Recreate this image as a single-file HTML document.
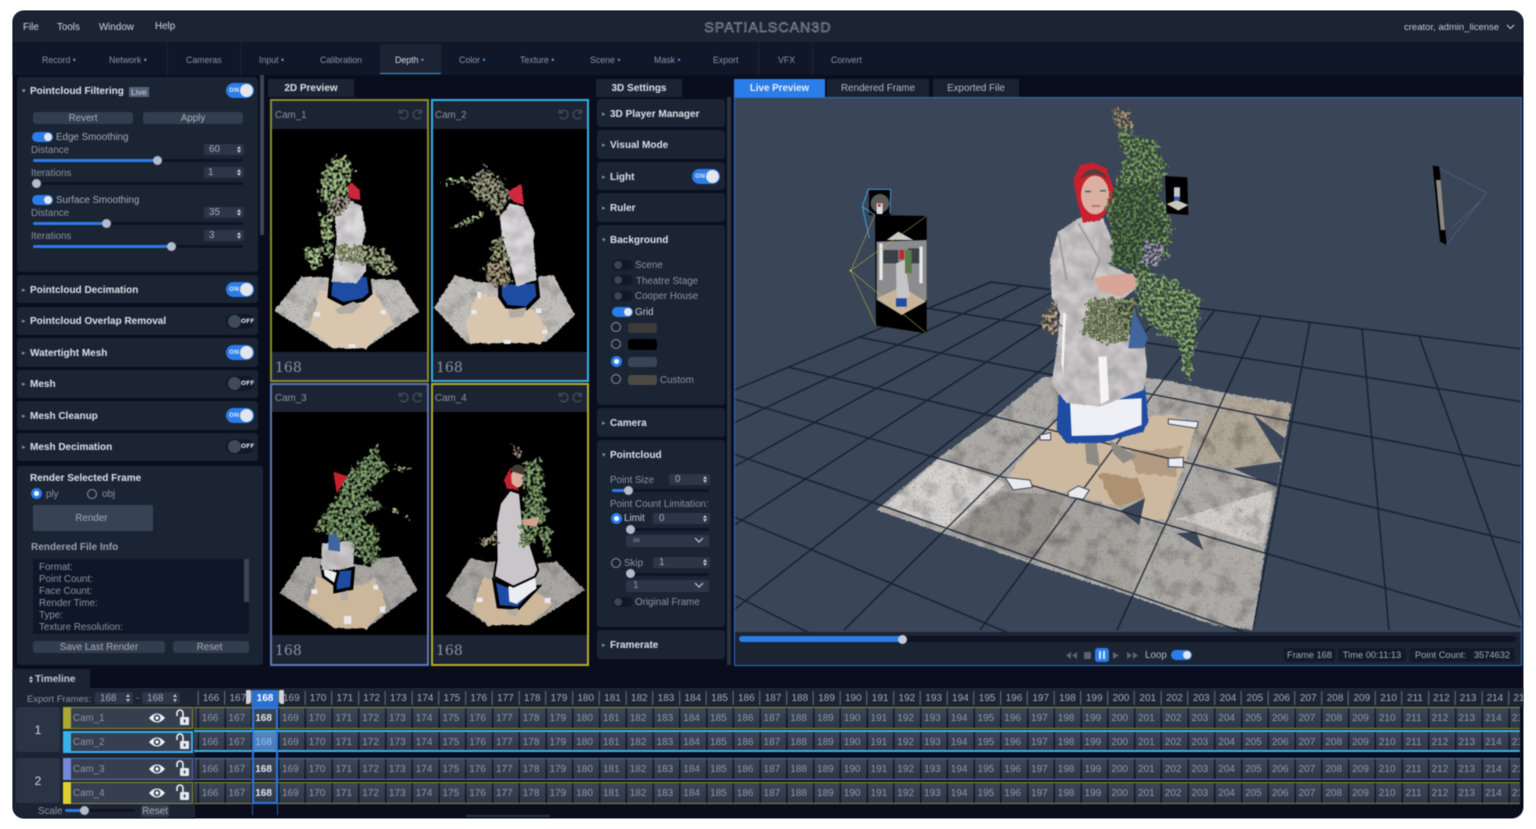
<!DOCTYPE html>
<html><head><meta charset="utf-8"><title>SpatialScan3D</title>
<style>
html,body{margin:0;padding:0;background:#fff;width:1536px;height:829px;overflow:hidden}
#app{position:absolute;left:13px;top:11px;width:1510px;height:807px;background:#0a0e1c;border-radius:11px;box-shadow:0 0 0 1px #8a8f98}
#r{position:absolute;left:0;top:0;width:1536px;height:829px;overflow:hidden;font:9.8px/12px "Liberation Sans",sans-serif;color:#a3abb9;filter:blur(.4px)}
.b,.t,.sp,.th,.fl,.tg,.ts,.rd,.dd{position:absolute}
.t{white-space:pre;margin-top:1px}
.h{font-weight:bold;font-size:10px;color:#dde1e8;margin-top:2px}
.m{color:#8b94a3}
.p{background:#1b2433;border-radius:3px}
.btn{background:#323d4e;border-radius:3px;text-align:center;color:#a9b1be}
.sp{background:#2c3647;border-radius:2px;color:#a3abb9;height:11px;line-height:12px}
.sp:before,.sp:after{content:"";position:absolute;right:3px;border-left:2px solid transparent;border-right:2px solid transparent}
.sp:before{top:2px;border-bottom:3px solid #c4cad4}
.sp:after{bottom:2px;border-top:3px solid #c4cad4}
.tr{background:#0e1422;height:3px;border-radius:2px}
.fl{background:#2b7de9;height:3px;border-radius:2px}
.th{width:9px;height:9px;border-radius:50%;background:#b4bccb}
.tg{width:28px;height:15px;border-radius:8px;background:#2b7de9;font:bold 6px/15px "DejaVu Sans",sans-serif;color:#c9dcf8}
.tg:after{content:"";position:absolute;right:1px;top:1px;width:13px;height:13px;border-radius:50%;background:#e3e6eb}
.tg.off{background:#121827;color:#d8dce3}
.tg.off:after{right:auto;left:2px;background:#3f4a5c}
.ts{width:21px;height:10px;border-radius:5px;background:#2b7de9}
.ts:after{content:"";position:absolute;right:1px;top:1px;width:8px;height:8px;border-radius:50%;background:#e3e6eb}
.ts.off{background:#121827}
.ts.off:after{right:auto;left:2px;background:#3a4556}
.rd{width:10px;height:10px;border:1px solid #8a93a2;border-radius:50%;box-sizing:border-box}
.rd.on{background:#fff;border:3px solid #2b7de9;width:11px;height:11px}
.dd{background:#2c3647;border-radius:2px;height:12px;line-height:12px}
.n{font-size:8.8px}
.row{position:absolute;left:194px;width:1326px;height:20px;overflow:hidden;white-space:pre;font-size:10px;line-height:22px;word-spacing:7.29px;padding-left:7.7px;box-sizing:border-box;color:#8d97a8;background:linear-gradient(#ffffff0a,#00000022),repeating-linear-gradient(90deg,#0e1322 0,#0e1322 1.5px,#343f50 1.5px,#343f50 26.75px);background-position:0 0,3.5px 0}
.row b{color:#e4e8ee}
</style></head><body>
<div id="app"></div>
<div id="r">
<!-- title + tabs -->
<div class="b" style="left:13px;top:11px;width:1510px;height:31px;background:#1c2433;border-radius:11px 11px 0 0"></div>
<div class="b" style="left:13px;top:42px;width:1510px;height:33px;background:#0f1729"></div>
<div class="t" style="left:23px;top:21px;color:#d3d8e0">File</div>
<div class="t" style="left:57px;top:21px;color:#d3d8e0">Tools</div>
<div class="t" style="left:99px;top:21px;color:#d3d8e0">Window</div>
<div class="t" style="left:155px;top:20px;color:#d3d8e0">Help</div>
<div class="t" style="left:1404px;top:21px;color:#c3c9d3;font-size:9.5px">creator, admin_license</div>
<div class="b" style="left:380px;top:44px;width:61px;height:29px;background:#1c2433;border-bottom:1px solid #38a0e0"></div>
<div class="b" style="left:167px;top:42px;width:1px;height:33px;background:#1c2536"></div>
<div class="b" style="left:240px;top:42px;width:1px;height:33px;background:#1c2536"></div>
<div class="b" style="left:758px;top:42px;width:1px;height:33px;background:#1c2536"></div>
<div class="b" style="left:812px;top:42px;width:1px;height:33px;background:#1c2536"></div>
<div class="t m n" style="left:42px;top:53px">Record •</div>
<div class="t m n" style="left:109px;top:53px">Network •</div>
<div class="t m n" style="left:186px;top:53px">Cameras</div>
<div class="t m n" style="left:259px;top:53px">Input •</div>
<div class="t m n" style="left:320px;top:53px">Calibration</div>
<div class="t n" style="left:395px;top:53px;color:#d8dde5">Depth <span style="color:#3a90f0">•</span></div>
<div class="t m n" style="left:459px;top:53px">Color <span style="color:#3a90f0">•</span></div>
<div class="t m n" style="left:520px;top:53px">Texture •</div>
<div class="t m n" style="left:590px;top:53px">Scene <span style="color:#3a90f0">•</span></div>
<div class="t m n" style="left:654px;top:53px">Mask <span style="color:#3a90f0">•</span></div>
<div class="t m n" style="left:713px;top:53px">Export</div>
<div class="t m n" style="left:778px;top:53px">VFX</div>
<div class="t m n" style="left:831px;top:53px">Convert</div>

<!-- left panel -->
<div class="b p" style="left:17px;top:77px;width:241px;height:195px"></div>
<div class="b" style="left:260px;top:75px;width:4px;height:160px;background:#3a4556"></div>
<div class="t" style="left:22px;top:85px;font-size:7px;color:#9aa3b1">▾</div>
<div class="t h" style="left:30px;top:84px">Pointcloud Filtering</div>
<div class="t" style="left:129px;top:86px;font-size:8.5px;line-height:10px;background:#56627a;color:#c7ccd6;padding:0 2px">Live</div>
<div class="tg" style="left:226px;top:83px;text-indent:3px">ON</div>
<div class="b btn" style="left:33px;top:112px;width:100px;height:12px;line-height:13px">Revert</div>
<div class="b btn" style="left:143px;top:112px;width:100px;height:12px;line-height:13px">Apply</div>
<div class="ts" style="left:32px;top:132px"></div><div class="t" style="left:56px;top:131px">Edge Smoothing</div>
<div class="t m" style="left:31px;top:144px">Distance</div><div class="sp" style="left:204px;top:144px;width:40px;text-indent:5px">60</div>
<div class="b tr" style="left:33px;top:159px;width:210px"></div><div class="fl" style="left:33px;top:159px;width:124px"></div><div class="th" style="left:153px;top:156px"></div>
<div class="t m" style="left:31px;top:167px">Iterations</div><div class="sp" style="left:204px;top:167px;width:40px;text-indent:4px">1</div>
<div class="b tr" style="left:33px;top:182px;width:210px"></div><div class="th" style="left:32px;top:179px"></div>
<div class="ts" style="left:32px;top:195px"></div><div class="t" style="left:56px;top:194px">Surface Smoothing</div>
<div class="t m" style="left:31px;top:207px">Distance</div><div class="sp" style="left:204px;top:207px;width:40px;text-indent:5px">35</div>
<div class="b tr" style="left:33px;top:222px;width:210px"></div><div class="fl" style="left:33px;top:222px;width:73px"></div><div class="th" style="left:102px;top:219px"></div>
<div class="t m" style="left:31px;top:230px">Iterations</div><div class="sp" style="left:204px;top:230px;width:40px;text-indent:5px">3</div>
<div class="b tr" style="left:33px;top:245px;width:210px"></div><div class="fl" style="left:33px;top:245px;width:138px"></div><div class="th" style="left:167px;top:242px"></div>

<div class="b p" style="left:17px;top:275px;width:241px;height:28px"></div>
<div class="b p" style="left:17px;top:307px;width:241px;height:28px"></div>
<div class="b p" style="left:17px;top:338px;width:241px;height:29px"></div>
<div class="b p" style="left:17px;top:370px;width:241px;height:28px"></div>
<div class="b p" style="left:17px;top:401px;width:241px;height:29px"></div>
<div class="b p" style="left:17px;top:433px;width:241px;height:28px"></div>
<div class="t" style="left:22px;top:284px;font-size:7px;color:#8a93a2">▸</div><div class="t h" style="left:30px;top:283px">Pointcloud Decimation</div><div class="tg" style="left:226px;top:282px;text-indent:3px">ON</div>
<div class="t" style="left:22px;top:315px;font-size:7px;color:#8a93a2">▸</div><div class="t h" style="left:30px;top:314px">Pointcloud Overlap Removal</div><div class="tg off" style="left:226px;top:314px;text-indent:15px">OFF</div>
<div class="t" style="left:22px;top:347px;font-size:7px;color:#8a93a2">▸</div><div class="t h" style="left:30px;top:346px">Watertight Mesh</div><div class="tg" style="left:226px;top:345px;text-indent:3px">ON</div>
<div class="t" style="left:22px;top:378px;font-size:7px;color:#8a93a2">▸</div><div class="t h" style="left:30px;top:377px">Mesh</div><div class="tg off" style="left:226px;top:376px;text-indent:15px">OFF</div>
<div class="t" style="left:22px;top:410px;font-size:7px;color:#8a93a2">▸</div><div class="t h" style="left:30px;top:409px">Mesh Cleanup</div><div class="tg" style="left:226px;top:408px;text-indent:3px">ON</div>
<div class="t" style="left:22px;top:441px;font-size:7px;color:#8a93a2">▸</div><div class="t h" style="left:30px;top:440px">Mesh Decimation</div><div class="tg off" style="left:226px;top:439px;text-indent:15px">OFF</div>

<div class="b p" style="left:17px;top:466px;width:246px;height:199px"></div>
<div class="t h" style="left:30px;top:471px">Render Selected Frame</div>
<div class="rd on" style="left:31px;top:488px"></div><div class="t m" style="left:46px;top:488px">ply</div>
<div class="rd" style="left:87px;top:489px"></div><div class="t m" style="left:102px;top:488px">obj</div>
<div class="b" style="left:33px;top:505px;width:120px;height:26px;background:#374354;border-radius:2px;text-align:center;line-height:27px;text-indent:-3px">Render</div>
<div class="t" style="left:31px;top:541px;font-weight:bold;color:#98a1af;font-size:10px">Rendered File Info</div>
<div class="b" style="left:33px;top:559px;width:216px;height:75px;background:#0f1627;overflow:hidden">
<div class="t m" style="left:6px;top:2px">Format:</div>
<div class="t m" style="left:6px;top:14px">Point Count:</div>
<div class="t m" style="left:6px;top:26px">Face Count:</div>
<div class="t m" style="left:6px;top:38px">Render Time:</div>
<div class="t m" style="left:6px;top:50px">Type:</div>
<div class="t m" style="left:6px;top:62px">Texture Resolution:</div>
<div class="b" style="left:211px;top:0;width:5px;height:43px;background:#3a4556"></div>
</div>
<div class="b btn" style="left:33px;top:641px;width:132px;height:12px;line-height:14px">Save Last Render</div>
<div class="b btn" style="left:173px;top:641px;width:76px;height:12px;line-height:14px;text-indent:-3px">Reset</div>

<!-- 2D preview -->
<div class="b" style="left:268px;top:79px;width:86px;height:18px;background:#1c2433;text-align:center;line-height:20px;font-weight:bold;color:#dde1e8;font-size:10px">2D Preview</div>
<div class="b" style="left:270px;top:99px;width:155px;height:279px;background:#1c2433;border:2px solid #888d2a"></div>
<div class="b" style="left:431px;top:99px;width:154px;height:279px;background:#1c2433;border:2px solid #3ab0e8"></div>
<div class="b" style="left:270px;top:383px;width:155px;height:279px;background:#1c2433;border:2px solid #5c78b8"></div>
<div class="b" style="left:431px;top:383px;width:154px;height:279px;background:#1c2433;border:2px solid #b5ae2c"></div>
<div class="b" style="left:272px;top:129px;width:155px;height:223px;background:#000"></div>
<div class="b" style="left:433px;top:129px;width:154px;height:223px;background:#000"></div>
<div class="b" style="left:272px;top:412px;width:155px;height:223px;background:#000"></div>
<div class="b" style="left:433px;top:412px;width:154px;height:223px;background:#000"></div>
<div class="t m" style="left:275px;top:109px">Cam_1</div><div class="t m" style="left:435px;top:109px">Cam_2</div>
<div class="t m" style="left:275px;top:392px">Cam_3</div><div class="t m" style="left:435px;top:392px">Cam_4</div>
<div class="t" style="left:275px;top:360px;font:14px/14px 'DejaVu Serif',serif;color:#8a94a8">168</div>
<div class="t" style="left:436px;top:360px;font:14px/14px 'DejaVu Serif',serif;color:#8a94a8">168</div>
<div class="t" style="left:275px;top:643px;font:14px/14px 'DejaVu Serif',serif;color:#8a94a8">168</div>
<div class="t" style="left:436px;top:643px;font:14px/14px 'DejaVu Serif',serif;color:#8a94a8">168</div>

<!-- 3D settings -->
<div class="b" style="left:596px;top:79px;width:86px;height:18px;background:#1c2433;text-align:center;line-height:20px;font-weight:bold;color:#dde1e8;font-size:10px">3D Settings</div>
<div class="b" style="left:727px;top:97px;width:4px;height:568px;background:#2a3444"></div>
<div class="b p" style="left:597px;top:99px;width:128px;height:28px"></div>
<div class="b p" style="left:597px;top:130px;width:128px;height:29px"></div>
<div class="b p" style="left:597px;top:162px;width:128px;height:28px"></div>
<div class="b p" style="left:597px;top:193px;width:128px;height:29px"></div>
<div class="b p" style="left:597px;top:225px;width:128px;height:180px"></div>
<div class="b p" style="left:597px;top:408px;width:128px;height:29px"></div>
<div class="b p" style="left:597px;top:440px;width:128px;height:187px"></div>
<div class="b p" style="left:597px;top:630px;width:128px;height:29px"></div>
<div class="t" style="left:602px;top:108px;font-size:7px;color:#8a93a2">▸</div><div class="t h" style="left:610px;top:107px">3D Player Manager</div>
<div class="t" style="left:602px;top:139px;font-size:7px;color:#8a93a2">▸</div><div class="t h" style="left:610px;top:138px">Visual Mode</div>
<div class="t" style="left:602px;top:171px;font-size:7px;color:#8a93a2">▸</div><div class="t h" style="left:610px;top:170px">Light</div><div class="tg" style="left:692px;top:169px;text-indent:3px">ON</div>
<div class="t" style="left:602px;top:202px;font-size:7px;color:#8a93a2">▸</div><div class="t h" style="left:610px;top:201px">Ruler</div>
<div class="t" style="left:602px;top:234px;font-size:7px;color:#8a93a2">▾</div><div class="t h" style="left:610px;top:233px">Background</div>
<div class="ts off" style="left:612px;top:260px"></div><div class="t m" style="left:635px;top:259px">Scene</div>
<div class="ts off" style="left:612px;top:275px"></div><div class="t m" style="left:636px;top:275px">Theatre Stage</div>
<div class="ts off" style="left:612px;top:291px"></div><div class="t m" style="left:635px;top:290px">Cooper House</div>
<div class="ts" style="left:612px;top:307px"></div><div class="t" style="left:635px;top:306px;color:#c3c9d3">Grid</div>
<div class="rd" style="left:611px;top:322px"></div><div class="b" style="left:628px;top:323px;width:29px;height:10px;background:#3a3a38;border-radius:3px"></div>
<div class="rd" style="left:611px;top:339px"></div><div class="b" style="left:628px;top:339px;width:29px;height:11px;background:#000;border-radius:3px"></div>
<div class="rd on" style="left:611px;top:356px"></div><div class="b" style="left:628px;top:357px;width:29px;height:10px;background:#3a4557;border-radius:3px"></div>
<div class="rd" style="left:611px;top:374px"></div><div class="b" style="left:628px;top:375px;width:29px;height:10px;background:#4d4a44;border-radius:3px"></div>
<div class="t m" style="left:660px;top:374px">Custom</div>
<div class="t" style="left:602px;top:417px;font-size:7px;color:#8a93a2">▸</div><div class="t h" style="left:610px;top:416px">Camera</div>
<div class="t" style="left:602px;top:449px;font-size:7px;color:#8a93a2">▾</div><div class="t h" style="left:610px;top:448px">Pointcloud</div>
<div class="t m" style="left:610px;top:474px">Point Size</div><div class="sp" style="left:669px;top:474px;width:41px;text-indent:6px">0</div>
<div class="b tr" style="left:612px;top:489px;width:97px"></div><div class="fl" style="left:612px;top:489px;width:16px"></div><div class="th" style="left:624px;top:486px"></div>
<div class="t m" style="left:610px;top:498px">Point Count Limitation:</div>
<div class="rd on" style="left:611px;top:513px"></div><div class="t" style="left:624px;top:512px;color:#c3c9d3">Limit</div><div class="sp" style="left:653px;top:513px;width:57px;text-indent:6px">0</div>
<div class="b tr" style="left:630px;top:528px;width:79px"></div><div class="th" style="left:626px;top:525px"></div>
<div class="dd m" style="left:626px;top:535px;width:83px;text-indent:7px">∞</div>
<div class="rd" style="left:611px;top:558px"></div><div class="t m" style="left:624px;top:557px">Skip</div><div class="sp" style="left:653px;top:557px;width:57px;text-indent:6px">1</div>
<div class="b tr" style="left:630px;top:573px;width:79px"></div><div class="th" style="left:626px;top:569px"></div>
<div class="dd m" style="left:626px;top:580px;width:83px;text-indent:7px">1</div>
<div class="ts off" style="left:612px;top:597px"></div><div class="t m" style="left:635px;top:596px">Original Frame</div>
<div class="t" style="left:602px;top:639px;font-size:7px;color:#8a93a2">▸</div><div class="t h" style="left:610px;top:638px">Framerate</div>

<!-- main view tabs -->
<div class="b" style="left:734px;top:79px;width:91px;height:19px;background:#2b7de9;text-align:center;line-height:19px;font-weight:bold;color:#e8eef8">Live Preview</div>
<div class="b" style="left:827px;top:79px;width:102px;height:18px;background:#1a2231;text-align:center;line-height:19px;color:#b3bac6">Rendered Frame</div>
<div class="b" style="left:933px;top:79px;width:86px;height:18px;background:#1a2231;text-align:center;line-height:19px;color:#b3bac6">Exported File</div>
<div class="b" style="left:734px;top:97px;width:786px;height:567px;background:#1c2433;border:1px solid #2b70c8"></div>
<div class="b" style="left:735px;top:98px;width:786px;height:534px;background:#3a4557"></div>
<div class="b" style="left:739px;top:636px;width:777px;height:6px;background:#0e1422;border-radius:3px"></div>
<div class="b" style="left:739px;top:636px;width:163px;height:6px;background:#2b7de9;border-radius:3px 0 0 3px"></div>
<div class="th" style="left:898px;top:635px;background:#c4cad4"></div>
<div class="b" style="left:1095px;top:648px;width:14px;height:14px;background:#2b7de9;border-radius:3px"></div>
<div class="b" style="left:1099px;top:651px;width:2px;height:8px;background:#dfe6f2"></div>
<div class="b" style="left:1103px;top:651px;width:2px;height:8px;background:#dfe6f2"></div>
<div class="b" style="left:1084px;top:652px;width:7px;height:7px;background:#5a6475;border-radius:1px"></div>
<div class="t" style="left:1145px;top:649px;color:#b3bac6">Loop</div>
<div class="ts" style="left:1171px;top:650px"></div>
<div class="b" style="left:1284px;top:648px;width:51px;height:14px;background:#121a2a;border-radius:3px;text-align:center;line-height:15px;font-size:9.3px">Frame 168</div>
<div class="b" style="left:1338px;top:648px;width:68px;height:14px;background:#121a2a;border-radius:3px;text-align:center;line-height:15px;font-size:9.3px">Time 00:11:13</div>
<div class="b" style="left:1410px;top:648px;width:105px;height:14px;background:#121a2a;border-radius:3px;text-align:center;line-height:15px;font-size:9.3px">Point Count:&nbsp;&nbsp;&nbsp;3574632</div>

<!-- timeline -->
<div class="b" style="left:13px;top:688px;width:1510px;height:19px;background:#1c2433"></div>
<div class="b" style="left:13px;top:707px;width:182px;height:111px;background:#1c2433;border-radius:0 0 0 11px"></div>
<div class="b" style="left:13px;top:669px;width:77px;height:19px;background:#1c2433"></div>
<div class="t" style="left:35px;top:673px;font-weight:bold;color:#c3c9d3;font-size:10px">Timeline</div>
<div class="b" style="left:29px;top:674px;border:2px solid transparent;border-bottom:3px solid #c3c9d3"></div>
<div class="b" style="left:29px;top:680px;border:2px solid transparent;border-top:3px solid #c3c9d3"></div>
<div class="t m" style="left:27px;top:692px;font-size:9.4px">Export Frames:</div>
<div class="sp" style="left:95px;top:692px;width:38px;height:12px;line-height:13px;text-indent:5px">168</div>
<div class="t m" style="left:136px;top:692px">-</div>
<div class="sp" style="left:142px;top:692px;width:38px;height:12px;line-height:13px;text-indent:5px">168</div>
<div class="b" style="left:194px;top:691px;width:1329px;height:14px;overflow:hidden;white-space:pre;font-size:10px;word-spacing:7.3px;line-height:16px;padding-left:8.7px;box-sizing:border-box;color:#a3abb9;background:repeating-linear-gradient(90deg,#6a7280 0,#6a7280 1px,transparent 1px,transparent 26.75px);background-position:3.7px 0">166 167 168 169 170 171 172 173 174 175 176 177 178 179 180 181 182 183 184 185 186 187 188 189 190 191 192 193 194 195 196 197 198 199 200 201 202 203 204 205 206 207 208 209 210 211 212 213 214 215</div>
<div class="b" style="left:252px;top:690px;width:26px;height:17px;background:#2b70d0;text-align:center;line-height:18px;font-size:10px;font-weight:bold;color:#fff">168</div>
<div class="b" style="left:246px;top:690px;width:5px;height:14px;background:#cfd3da;border-radius:1px 1px 3px 0"></div>
<div class="b" style="left:279px;top:690px;width:5px;height:14px;background:#cfd3da;border-radius:1px 1px 0 3px"></div>

<div class="b" style="left:16px;top:707px;width:44px;height:45px;background:#2b3445;border-radius:3px;text-align:center;line-height:47px;font-size:12px;color:#d3d8e0">1</div>
<div class="b" style="left:16px;top:758px;width:44px;height:45px;background:#2b3445;border-radius:3px;text-align:center;line-height:47px;font-size:12px;color:#d3d8e0">2</div>
<div class="b" style="left:63px;top:707px;width:8px;height:22px;background:#a8a832"></div>
<div class="b" style="left:63px;top:731px;width:8px;height:22px;background:#3ab0e8"></div>
<div class="b" style="left:63px;top:758px;width:8px;height:22px;background:#7488dc"></div>
<div class="b" style="left:63px;top:782px;width:8px;height:22px;background:#ddd030"></div>
<div class="b" style="left:71px;top:707px;width:121px;height:20px;background:#363f50;border:1px solid #888d2a;border-left:0"></div>
<div class="b" style="left:71px;top:731px;width:120px;height:18px;background:#363f50;border:2px solid #3ab0e8;border-left:0"></div>
<div class="b" style="left:71px;top:758px;width:121px;height:20px;background:#363f50;border:1px solid #5c6fc0;border-left:0"></div>
<div class="b" style="left:71px;top:782px;width:121px;height:20px;background:#363f50;border:1px solid #888d2a;border-left:0"></div>
<div class="t m" style="left:73px;top:712px">Cam_1</div>
<div class="t m" style="left:73px;top:736px">Cam_2</div>
<div class="t m" style="left:73px;top:763px">Cam_3</div>
<div class="t m" style="left:73px;top:787px">Cam_4</div>

<div class="row" style="top:708px">166 167 <b>168</b> 169 170 171 172 173 174 175 176 177 178 179 180 181 182 183 184 185 186 187 188 189 190 191 192 193 194 195 196 197 198 199 200 201 202 203 204 205 206 207 208 209 210 211 212 213 214 215</div>
<div class="row" style="top:732px"><span>166 167 </span><span style="color:#86a8e8">168</span> 169 170 171 172 173 174 175 176 177 178 179 180 181 182 183 184 185 186 187 188 189 190 191 192 193 194 195 196 197 198 199 200 201 202 203 204 205 206 207 208 209 210 211 212 213 214 215</div>
<div class="row" style="top:759px">166 167 <b>168</b> 169 170 171 172 173 174 175 176 177 178 179 180 181 182 183 184 185 186 187 188 189 190 191 192 193 194 195 196 197 198 199 200 201 202 203 204 205 206 207 208 209 210 211 212 213 214 215</div>
<div class="row" style="top:783px">166 167 <b>168</b> 169 170 171 172 173 174 175 176 177 178 179 180 181 182 183 184 185 186 187 188 189 190 191 192 193 194 195 196 197 198 199 200 201 202 203 204 205 206 207 208 209 210 211 212 213 214 215</div>
<div class="b" style="left:252px;top:732px;width:26px;height:20px;background:#2b70d0;mix-blend-mode:screen;opacity:.75"></div>
<div class="b" style="left:194px;top:707px;width:1326px;height:1px;background:#888d2a"></div>
<div class="b" style="left:194px;top:728px;width:1326px;height:1px;background:#888d2a"></div>
<div class="b" style="left:194px;top:730px;width:1326px;height:2px;background:#3ab0e8"></div>
<div class="b" style="left:194px;top:750px;width:1326px;height:2px;background:#3ab0e8"></div>
<div class="b" style="left:194px;top:758px;width:1326px;height:1px;background:#5c6fc0"></div>
<div class="b" style="left:194px;top:779px;width:1326px;height:1px;background:#5c6fc0"></div>
<div class="b" style="left:194px;top:782px;width:1326px;height:1px;background:#888d2a"></div>
<div class="b" style="left:194px;top:803px;width:1326px;height:1px;background:#888d2a"></div>
<div class="b" style="left:252px;top:707px;width:22px;height:93px;border:2px solid #2b78e0"></div>
<div class="b" style="left:252px;top:803px;width:1px;height:12px;background:#2b5aa0"></div>
<div class="b" style="left:277px;top:803px;width:1px;height:12px;background:#2b5aa0"></div>
<div class="t m" style="left:38px;top:805px">Scale</div>
<div class="b tr" style="left:65px;top:809px;width:70px"></div><div class="fl" style="left:65px;top:809px;width:19px"></div><div class="th" style="left:80px;top:806px"></div>
<div class="b btn" style="left:141px;top:805px;width:28px;height:12px;line-height:13px">Reset</div>
<div class="b" style="left:466px;top:815px;width:84px;height:2px;background:#2a3444"></div>

<svg style="position:absolute;left:0;top:0;display:block" width="1536" height="829" viewBox="0 0 1536 829">
<defs>
<filter id="leaf" x="-15%" y="-15%" width="130%" height="130%" color-interpolation-filters="sRGB">
<feTurbulence type="fractalNoise" baseFrequency=".06" numOctaves="3" seed="5" result="n"/>
<feDisplacementMap in="SourceGraphic" in2="n" scale="38" xChannelSelector="R" yChannelSelector="G" result="d"/>
<feTurbulence type="fractalNoise" baseFrequency=".11" numOctaves="3" seed="9" result="m"/>
<feColorMatrix in="m" type="matrix" values="2.6 0 0 0 -.65 2.6 0 0 0 -.65 2.6 0 0 0 -.65 0 0 0 0 1" result="g"/>
<feBlend in="d" in2="g" mode="multiply" result="b"/>
<feColorMatrix in="m" type="matrix" values="0 0 0 0 0 0 0 0 0 0 0 0 0 0 0 7 0 0 0 -2" result="h"/>
<feComposite in="b" in2="d" operator="in" result="c"/>
<feComposite in="c" in2="h" operator="in"/>
</filter>
<filter id="con" x="-5%" y="-5%" width="110%" height="110%" color-interpolation-filters="sRGB">
<feTurbulence type="fractalNoise" baseFrequency=".12" numOctaves="2" seed="4" result="n"/>
<feDisplacementMap in="SourceGraphic" in2="n" scale="8" xChannelSelector="R" yChannelSelector="G" result="d"/>
<feTurbulence type="fractalNoise" baseFrequency=".02" numOctaves="3" seed="7" result="m"/>
<feColorMatrix in="m" type="matrix" values=".6 0 0 0 .68 .6 0 0 0 .68 .6 0 0 0 .68 0 0 0 0 1" result="g"/>
<feBlend in="d" in2="g" mode="multiply" result="b"/>
<feTurbulence type="fractalNoise" baseFrequency=".38" numOctaves="1" seed="2" result="s"/>
<feColorMatrix in="s" type="matrix" values="0 0 0 0 .18 0 0 0 0 .22 0 0 0 0 .32 14 0 0 0 -9.5" result="dots"/>
<feMerge result="o"><feMergeNode in="b"/><feMergeNode in="dots"/></feMerge>
<feComposite in="o" in2="d" operator="in"/>
</filter>
<filter id="tan" x="-5%" y="-5%" width="110%" height="110%" color-interpolation-filters="sRGB">
<feTurbulence type="fractalNoise" baseFrequency=".04" numOctaves="3" seed="4" result="n"/>
<feDisplacementMap in="SourceGraphic" in2="n" scale="14" xChannelSelector="R" yChannelSelector="G"/>
</filter>
<filter id="ro" x="-5%" y="-5%" width="110%" height="110%" color-interpolation-filters="sRGB">
<feTurbulence type="fractalNoise" baseFrequency=".15" numOctaves="2" seed="3" result="n"/>
<feDisplacementMap in="SourceGraphic" in2="n" scale="6" xChannelSelector="R" yChannelSelector="G"/>
</filter>
<filter id="sh" x="-5%" y="-5%" width="110%" height="110%" color-interpolation-filters="sRGB">
<feTurbulence type="fractalNoise" baseFrequency=".15" numOctaves="2" seed="3" result="n"/>
<feDisplacementMap in="SourceGraphic" in2="n" scale="6" xChannelSelector="R" yChannelSelector="G" result="d"/>
<feTurbulence type="fractalNoise" baseFrequency=".025" numOctaves="2" seed="11" result="m"/>
<feColorMatrix in="m" type="matrix" values=".3 0 0 0 .78 .3 0 0 0 .78 .3 0 0 0 .78 0 0 0 0 1" result="g"/>
<feBlend in="d" in2="g" mode="multiply" result="b"/>
<feComposite in="b" in2="d" operator="in"/>
</filter>
<clipPath id="vc"><rect x="735" y="98" width="786" height="534"/></clipPath>
<g id="grid" fill="none" stroke="#1a2434" stroke-width="1.5">
<path d="M1525,630L1419,336M1389,630L1362,329M1253,630L1310,322M1117,630L1261,316M980,630L1214,311M844,630L1172,305M708,630L1132,299M572,630L1090,295M436,630L1054,291M300,630L1021,286M164,630L991,282"/>
<path d="M991,282L1530,350M926,308L1530,403M858,337L1530,468M788,367L1530,545M720,395L1530,630M651,425L1266,640M583,453L1025,640M512,483L823,640"/>
</g>
<g id="undo" fill="none" stroke="#3f4959" stroke-width="1.5"><path d="M-3.5,-4.5V-1H0M-3.2,-1.2A4.2,4.2 0 1 1 -3,2.6"/></g>
<g id="redo" fill="none" stroke="#3f4959" stroke-width="1.5"><path d="M3.5,-4.5V-1H0M3.2,-1.2A4.2,4.2 0 1 0 3,2.6"/></g>
<g id="eye"><path fill="#f2f4f7" d="M-8,0Q0,-9 8,0Q0,9 -8,0Z"/><circle r="3.4" fill="#363f50"/><circle r="1.7" fill="#f2f4f7"/></g>
<g id="lock"><path fill="none" stroke="#f2f4f7" stroke-width="1.6" d="M-6,-2V-5A3,3 0 0 1 0,-5V0"/><rect x="-3" y="-1" width="9" height="8" rx="1" fill="#e6e9ee"/><rect x="0.8" y="1.5" width="1.6" height="3" fill="#363f50"/></g>
</defs>

<!-- cam header icons -->
<use href="#undo" x="403" y="114"/><use href="#redo" x="418" y="114"/>
<use href="#undo" x="563" y="114"/><use href="#redo" x="578" y="114"/>
<use href="#undo" x="403" y="397"/><use href="#redo" x="418" y="397"/>
<use href="#undo" x="563" y="397"/><use href="#redo" x="578" y="397"/>
<!-- timeline icons -->
<use href="#eye" x="157" y="718"/><use href="#lock" x="183" y="718"/>
<use href="#eye" x="157" y="742"/><use href="#lock" x="183" y="742"/>
<use href="#eye" x="157" y="769"/><use href="#lock" x="183" y="769"/>
<use href="#eye" x="157" y="793"/><use href="#lock" x="183" y="793"/>
<!-- title -->
<text x="768" y="32" text-anchor="middle" font-family="Liberation Sans, sans-serif" font-size="14" letter-spacing="1.15" fill="none" stroke="#b4b8bf" stroke-width=".8" stroke-dasharray="1.3 .8">SPATIALSCAN3D</text>
<path d="M1507,25l3.5,3.5l3.5,-3.5" fill="none" stroke="#c3c9d3" stroke-width="1.1"/>
<path d="M695,538l4,4l4,-4M695,583l4,4l4,-4" fill="none" stroke="#c3c9d3" stroke-width="1.2"/>
<!-- player icons -->
<path fill="#5a6475" d="M1071,652v7l-5,-3.500zM1077,652v7l-5,-3.500zM1113,652v7l6,-3.500zM1127,652v7l5,-3.500zM1133,652v7l5,-3.500z"/>

<!-- CAM 1 -->
<g transform="translate(270,100) scale(.3333)">
<g filter="url(#con)"><path fill="#c0bdb9" d="M12,632L95,530L385,540L448,635L285,745L190,745Z"/></g>
<path fill="#d9c6ae" filter="url(#tan)" d="M150,570L310,570L370,670L285,745L190,745L118,685Z"/>
<path fill="#e8e8ee" d="M132,636h18v14h-18zM332,630h16v13h-16zM236,732h20v13h-20z"/>
<path fill="#1f4ca3" stroke="#000" stroke-width="11" d="M183,530L295,525L302,580L280,600L220,612L178,590Z"/>
<path fill="#b3aca4" d="M195,628L250,605L275,615L248,640L205,642Z"/>
<path fill="#dcd9dc" filter="url(#sh)" d="M195,350L240,300L275,320L288,390L275,440L290,510L260,550L185,545L192,480L200,420Z"/>
<path fill="#c9273c" filter="url(#ro)" d="M228,262L245,248L270,270L270,300L240,295Z"/>
<g filter="url(#leaf)"><path fill="#a5c48a" d="M155,215L200,165L235,180L250,215L232,285L205,335L150,300Z"/><path fill="#aca694" d="M180,300L235,280L240,320L205,350L175,340Z"/><path fill="#b4d094" d="M150,340L185,345L185,420L195,490L170,470L155,400ZM100,450L160,435L160,490L130,510L110,480Z"/><path fill="#a8b488" d="M195,430L280,440L345,450L380,510L340,530L290,490L210,490Z"/></g>
</g>
<!-- CAM 2 -->
<g transform="translate(270,100) scale(.3333)">
<g filter="url(#con)"><path fill="#c0bdb9" d="M492,622L555,525L620,545L800,555L805,530L850,525L915,645L830,725L590,730Z"/></g>
<path fill="#d9c6ae" filter="url(#tan)" d="M625,575L690,600L790,630L835,690L815,730L600,730L590,670Z"/>
<path fill="#e8e8ee" d="M604,630h16v13h-16zM797,626h18v13h-18zM817,690h16v11h-16zM702,720h20v12h-20zM622,575h11v20h-11z"/>
<path fill="#1f4ca3" stroke="#000" stroke-width="11" d="M690,550L800,545L805,590L770,625L710,620L690,590Z"/>
<path fill="#b3aca4" d="M715,630L770,622L760,650L720,655Z"/>
<path fill="#dcd9dc" filter="url(#sh)" d="M690,350L720,310L760,320L795,400L790,420L800,540L740,560L715,470L695,405Z"/>
<path fill="#d0293f" filter="url(#ro)" d="M712,275L755,252L762,315L730,305Z"/>
<g filter="url(#leaf)"><path fill="#a8aa8c" d="M600,240L640,210L690,235L720,290L690,350L640,305L610,290Z"/><path fill="#b4d094" d="M520,235L600,237L600,250L520,247ZM545,385L640,332L648,345L560,385Z"/><path fill="#a8b488" d="M665,430L700,410L720,490L730,545L700,550L665,470Z"/><path fill="#b8a78c" d="M650,490L710,480L715,560L660,555L640,520Z"/><path fill="#9a9680" d="M630,178L650,195L690,235L680,240Z"/></g>
</g>
<!-- CAM 3 -->
<g transform="translate(270,380) scale(.3333)">
<g filter="url(#con)"><path fill="#a9a6a2" d="M30,640L100,530L150,535L300,560L320,535L385,530L442,630L290,745L195,745Z"/></g>
<path fill="#cdb79a" filter="url(#tan)" d="M140,590L280,620L315,590L350,680L290,745L195,745L112,675Z"/>
<path fill="#e8e8ee" d="M124,628h18v14h-18zM310,615h14v14h-14zM330,680h16v18h-16zM222,708h22v24h-22z"/>
<path fill="#1f4ca3" stroke="#000" stroke-width="10" d="M195,570L250,565L245,625L195,635Z"/>
<path fill="#ecedf2" stroke="#000" stroke-width="8" d="M155,560L205,575L195,615L160,590Z"/>
<path fill="#d0ccce" filter="url(#sh)" d="M155,490L255,480L250,560L210,570L155,570Z"/>
<path fill="#b3aca4" d="M210,640L235,630L235,660L215,662Z"/>
<path fill="#c4222f" filter="url(#ro)" d="M190,275L235,290L200,340Z"/>
<path fill="#3f64a0" d="M175,450L210,450L210,515L175,510Z"/>
<g filter="url(#leaf)"><path fill="#86a872" d="M170,400L250,260L320,195L330,235L360,270L285,345L350,385L265,400L330,460L320,535L285,560L240,490L150,450L125,450Z"/><path fill="#b4d094" d="M370,258L425,258L425,272L370,272ZM368,390L388,390L388,404L368,404ZM405,408L425,416L420,426L405,418Z"/></g>
</g>
<!-- CAM 4 -->
<g transform="translate(270,380) scale(.3333)">
<g filter="url(#con)"><path fill="#a9a6a2" d="M528,650L600,535L650,545L800,550L860,545L945,630L780,735L655,735Z"/></g>
<path fill="#cdb79a" filter="url(#tan)" d="M640,590L800,640L850,670L780,735L655,735L605,690Z"/>
<path fill="#e8e8ee" d="M620,653h18v14h-18zM824,654h18v15h-18z"/>
<path fill="#1f4ca3" stroke="#000" stroke-width="10" d="M672,600L730,625L805,620L745,685L685,680Z"/>
<path fill="#ecedf2" d="M715,620L795,590L800,625L740,672L718,665Z"/>
<path fill="#b3aca4" d="M710,690L745,685L740,710L715,705Z"/>
<path fill="#c9c5c9" stroke="#000" stroke-width="6" d="M720,330L690,370L678,430L680,540L672,590L730,620L795,590L805,570L780,490L760,440L750,340Z"/>
<ellipse cx="742" cy="295" rx="20" ry="28" fill="#d8ae9e"/>
<path fill="#413a36" d="M720,270Q740,240 765,265L762,285L728,275Z"/>
<path fill="#c2202f" filter="url(#ro)" d="M702,300L722,262L725,310L750,332L710,325Z"/>
<g filter="url(#leaf)"><path fill="#86a872" d="M765,240L815,235L820,350L835,390L805,450L845,440L835,540L810,470L750,510L750,440L770,340L760,280Z"/><path fill="#b8a78c" d="M620,485L680,455L680,490L640,495ZM725,195L745,205L752,240L740,235Z"/></g>
<path fill="#d0a090" d="M755,420L810,410L800,440L760,435Z"/>
</g>

<!-- MAIN VIEW -->
<g clip-path="url(#vc)">
<use href="#grid"/>
<g transform="translate(850,380) scale(.3333)">
<g filter="url(#con)">
<path fill="#aeaba7" d="M80,390L270,230L430,115L580,-9L920,-5L1130,40L1325,70L1295,240L1280,330L1245,510L1210,750L1090,735L850,650L540,550L280,460Z"/>
<path fill="#d4d1ce" d="M110,375L270,235L470,310L290,450Z"/>
<path fill="#96928d" d="M450,335L650,345L700,400L545,545L300,455Z"/>
<path fill="#a6a29d" d="M650,345L800,390L870,420L850,640L555,545Z"/>
<path fill="#cfcbc8" d="M970,420L1270,330L1240,500L1000,420Z"/>
<path fill="#b0a696" d="M1040,140L1130,50L1320,75L1290,240L1150,265L1040,240Z"/>
</g>
<g filter="url(#tan)">
<path fill="#cdb8a0" d="M500,250L610,130L640,165L880,110L960,105L1040,130L1000,260L950,420L870,420L885,355L800,380L650,340L560,325L470,300Z"/>
<path fill="#ad9170" d="M745,280L860,295L890,355L800,380L775,345Z"/>
<path fill="#b29b80" d="M840,215L1000,200L975,290L860,280Z"/>
</g>
<path fill="#3a4557" d="M1208,102L1305,175L1293,240ZM1150,265L1293,245L1280,322ZM812,392L885,355L868,436ZM980,460L1038,455L1060,510Z"/>
</g>
<use href="#grid" opacity=".85"/>
<g transform="translate(850,380) scale(.3333)">
<path fill="#e9ebf0" stroke="#3a4557" stroke-width="3" d="M570,165L602,158L602,180L570,180ZM955,117L1045,125L1040,145L955,132ZM955,235L1000,232L1000,262L955,260ZM655,335L685,318L718,330L700,358L655,350ZM465,292L540,300L548,322L490,330Z"/>
</g>
<!-- figure -->
<g transform="translate(1000,100) scale(.3333)">
<path fill="#1f4ca3" filter="url(#ro)" d="M175,885L170,990L200,1030L300,1030L430,995L445,965L435,855L400,880Z"/>
<path fill="#eef0f5" d="M210,905L300,915L315,880L320,900L425,895L425,975L340,1005L215,1008Z"/>
<path fill="#8e8a84" d="M255,1030L290,1030L300,1100L260,1090ZM330,1020L410,1070L370,1090L340,1060Z"/>
<path fill="#cfcbcd" filter="url(#sh)" d="M235,355L175,395L150,480L155,590L180,640L170,750L155,850L200,910L300,920L430,870L442,800L430,720L380,700L345,620L430,545L340,500L340,430L310,355L270,345Z"/>
<path fill="#f4f4f6" d="M295,770L320,770L327,900L302,912ZM190,640L198,640L190,820L184,790Z"/>
<path fill="none" stroke="#a09c9c" stroke-width="6" d="M235,370L300,480L275,540M175,400L200,540"/>
<path fill="#a9a5a6" d="M300,400L340,430L335,500L290,470Z" opacity=".6"/>
<path fill="#c9202f" filter="url(#ro)" d="M220,240L240,195L280,188L320,205L345,280L330,320L300,362L250,368L235,320Z"/>
<ellipse cx="285" cy="285" rx="42" ry="58" fill="#dcb0a0"/>
<path fill="#4a4038" d="M238,240Q280,175 328,240Q285,205 238,240Z"/>
<path fill="#3a6e86" d="M255,272h18v5h-18zM300,270h18v5h-18z"/>
<path fill="#b87a70" d="M275,315h26v6h-26z"/>
<g filter="url(#leaf)">
<path fill="#b8a78c" d="M120,660L170,600L178,690L135,700Z"/>
<path fill="#a89a80" d="M335,25L385,30L400,90L370,110L350,70Z"/>
<path fill="#78a066" d="M350,95L400,100L470,130L500,200L480,290L520,380L500,470L440,510L340,500L335,430L320,320L350,240L375,170Z"/>
<path fill="#5c8450" d="M340,250L470,250L490,400L440,520L335,500Z"/>
<path fill="#a8a8bc" d="M430,420L500,430L470,500L420,490Z"/>
<path fill="#88ae74" d="M400,500L540,550L605,600L590,690L570,850L545,800L540,730L470,690L420,640Z"/>
<path fill="#90a070" d="M265,600L400,590L410,620L385,720L320,730L245,700Z"/>
</g>
<path fill="#41659c" d="M400,630L445,715L430,745L385,745Z"/>
<path fill="#d8a596" d="M280,535L330,525L400,520L410,560L360,590L300,570Z"/>
<path fill="#000" d="M495,228L562,232L565,345L500,340Z"/>
<path fill="#c9c5b8" d="M500,312L530,300L565,315L535,332Z"/>
<path fill="#c5c5c8" d="M522,262h18v38h-18z"/><path fill="#2a5cb0" d="M522,290h18v12h-18z"/>
</g>
<!-- cameras -->
<g transform="translate(830,160) scale(.3333)">
<path fill="#000" d="M117,90L182,88L182,165L117,165Z"/>
<circle cx="150" cy="130" r="28" fill="#5c5a58"/><path fill="#ddd" d="M140,130h18v32h-18z"/><path fill="#c92030" d="M144,132h8v8h-8z"/>
<path fill="none" stroke="#3aa0e8" stroke-width="3" d="M115,88L182,88L180,160M115,88L97,140L118,235M97,140L115,88M97,140L135,165"/>
<path fill="#000" d="M135,165L290,168L290,520L138,497Z"/>
<path fill="#8c8c8e" d="M140,245L290,240L290,420L215,465L140,420Z"/>
<path fill="#ccc" d="M170,240L205,215L250,240Z"/>
<path fill="#3a4048" d="M160,270h45v40h-45zM235,265h40v45h-40z"/>
<path fill="#e8e8e8" d="M148,250h10v110h-10zM268,260h10v110h-10z"/>
<path fill="#c8b49a" d="M140,415L215,380L288,425L215,465Z"/>
<path fill="#c5c5c8" d="M198,310L225,300L240,410L200,420Z"/><path fill="#c92030" d="M208,270h14v28h-14z"/><path fill="#5c7a4a" d="M225,270h20v70h-20z"/><path fill="#1f4ca3" d="M198,415h32v25h-32z"/>
<path fill="none" stroke="#c4c040" stroke-width="2" stroke-dasharray="5 2" d="M62,332L135,165M62,332L290,168M62,332L138,497M62,332L290,520"/>
<circle cx="62" cy="332" r="3" fill="#e0dc40"/>
</g>
<g transform="translate(1380,0) scale(.3333)">
<path fill="#000" d="M158,497L178,500L200,735L180,725Z"/>
<path fill="#8d8a80" d="M168,540L182,540L195,690L182,690Z"/>
<path fill="none" stroke="#5c78c0" stroke-width="2" stroke-dasharray="6 4" d="M178,505L320,578L200,735M300,605L218,683"/>
</g>
</g>
</svg>
</div>
</body></html>
